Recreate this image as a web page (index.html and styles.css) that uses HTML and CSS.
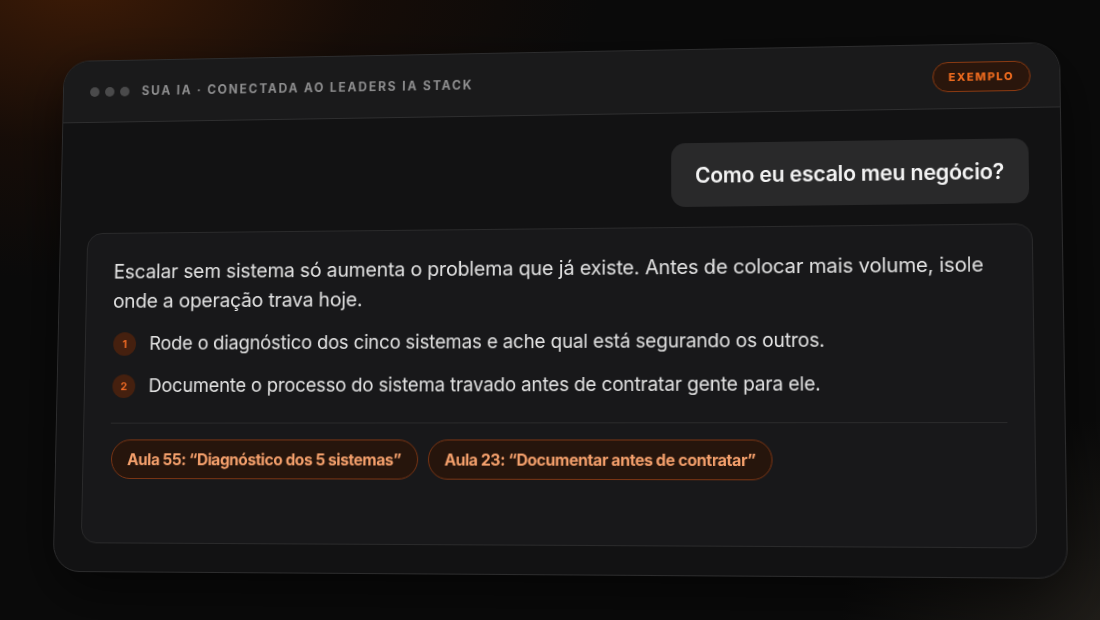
FILE: index.html
```html
<!DOCTYPE html>
<html lang="pt-BR">
<head>
<meta charset="utf-8">
<title>Sua IA</title>
<link rel="stylesheet" href="styles.css">
</head>
<body>
<div class="stage">
  <div class="window">
    <div class="win-header">
      <div class="dots"><span></span><span></span><span></span></div>
      <div class="win-title">SUA IA · CONECTADA AO LEADERS IA STACK</div>
      <div class="badge">EXEMPLO</div>
    </div>
    <div class="win-body">
      <div class="user-row">
        <div class="user-bubble">Como eu escalo meu negócio?</div>
      </div>
      <div class="answer">
        <p class="answer-text">Escalar sem sistema só aumenta o problema que já existe. Antes de colocar mais volume, isole onde a operação trava hoje.</p>
        <ol class="steps">
          <li><span class="num">1</span><span>Rode o diagnóstico dos cinco sistemas e ache qual está segurando os outros.</span></li>
          <li><span class="num">2</span><span>Documente o processo do sistema travado antes de contratar gente para ele.</span></li>
        </ol>
        <div class="divider"></div>
        <div class="chips">
          <span class="chip">Aula 55: “Diagnóstico dos 5 sistemas”</span>
          <span class="chip">Aula 23: “Documentar antes de contratar”</span>
        </div>
      </div>
    </div>
  </div>
</div>
</body>
</html>
```
FILE: styles.css
```css
* { box-sizing: border-box; }
html, body {
  margin: 0;
  padding: 0;
  width: 1100px;
  height: 620px;
  overflow: hidden;
}
body {
  font-family: Inter, "Noto Sans", "Liberation Sans", sans-serif;
  background:
    radial-gradient(ellipse 520px 300px at 80px -20px, rgba(70, 30, 6, 0.85), rgba(40, 16, 4, 0.4) 55%, rgba(0,0,0,0) 100%),
    radial-gradient(ellipse 260px 200px at 1100px 620px, rgba(40, 36, 30, 0.7), rgba(0,0,0,0) 100%),
    #0a0a0a;
}
.stage {
  width: 1100px;
  height: 620px;
  display: flex;
  align-items: center;
  justify-content: center;
  padding-right: 3px;
  padding-top: 2px;
  perspective: 1200px;
  perspective-origin: calc(50% + 200px) 50%;
}
.window {
  width: 1017px;
  height: 524px;
  flex: none;
  border-radius: 28px;
  border: 1px solid #2c2c2d;
  background: #121213;
  display: flex;
  flex-direction: column;
  overflow: hidden;
  transform: rotateX(2.5deg) rotateY(-3.4deg) rotateZ(-0.21deg);
  box-shadow: 0 20px 60px rgba(0,0,0,0.6);
}
.win-header {
  height: 64px;
  flex: none;
  display: flex;
  align-items: center;
  padding: 0 28px 0 28px;
  background: #1a1a1b;
  border-bottom: 1px solid #2e2e2f;
}
.dots {
  display: flex;
  gap: 6px;
  margin-right: 13px;
}
.dots span {
  width: 10px;
  height: 10px;
  border-radius: 50%;
  background: #4a4a4b;
}
.win-title {
  font-size: 12.5px;
  font-weight: 700;
  letter-spacing: 1.9px;
  color: #8e8e8f;
  flex: 1;
}
.badge {
  height: 30px;
  padding: 0 15px;
  display: flex;
  align-items: center;
  border: 1px solid #8a3a12;
  border-radius: 15px;
  background: #2a160c;
  color: #ec6a1e;
  font-size: 11px;
  font-weight: 800;
  letter-spacing: 1.5px;
}
.win-body {
  flex: 1;
  display: flex;
  flex-direction: column;
  padding: 30px 28px 28px 28px;
  gap: 20px;
}
.user-row {
  display: flex;
  justify-content: flex-end;
  padding-right: 3px;
}
.user-bubble {
  background: #29292a;
  border-radius: 14px;
  height: 64px;
  padding: 0 24px;
  display: flex;
  align-items: center;
  color: #f4f4f4;
  font-size: 21px;
  font-weight: 600;
  letter-spacing: -0.2px;
}
.answer {
  flex: 1;
  border: 1px solid #2a2a2b;
  border-radius: 16px;
  background: #18181a;
  padding: 24px 26px 20px 28px;
}
.answer-text {
  margin: 0;
  color: #e2e2e2;
  font-size: 20px;
  line-height: 30px;
  letter-spacing: -0.15px;
}
.steps {
  list-style: none;
  margin: 14px 0 0 0;
  padding: 0;
  display: flex;
  flex-direction: column;
  gap: 13px;
}
.steps li {
  display: flex;
  align-items: center;
  gap: 14px;
  color: #e2e2e2;
  font-size: 19px;
  line-height: 30px;
  letter-spacing: -0.15px;
}
.num {
  width: 24px;
  height: 24px;
  margin-left: 1px;
  border-radius: 50%;
  background: #45200f;
  color: #f06a24;
  font-size: 11px;
  font-weight: 700;
  display: flex;
  align-items: center;
  justify-content: center;
  flex: none;
}
.divider {
  height: 1px;
  background: #2a2a2b;
  margin: 22px 0 16px 0;
}
.chips {
  display: flex;
  gap: 10px;
  margin-left: 1px;
}
.chip {
  height: 40px;
  padding: 0 16px;
  display: flex;
  align-items: center;
  border: 1px solid #7a3514;
  border-radius: 20px;
  background: #26150c;
  color: #f4a06c;
  font-size: 16px;
  font-weight: 700;
  letter-spacing: -0.45px;
}
```
